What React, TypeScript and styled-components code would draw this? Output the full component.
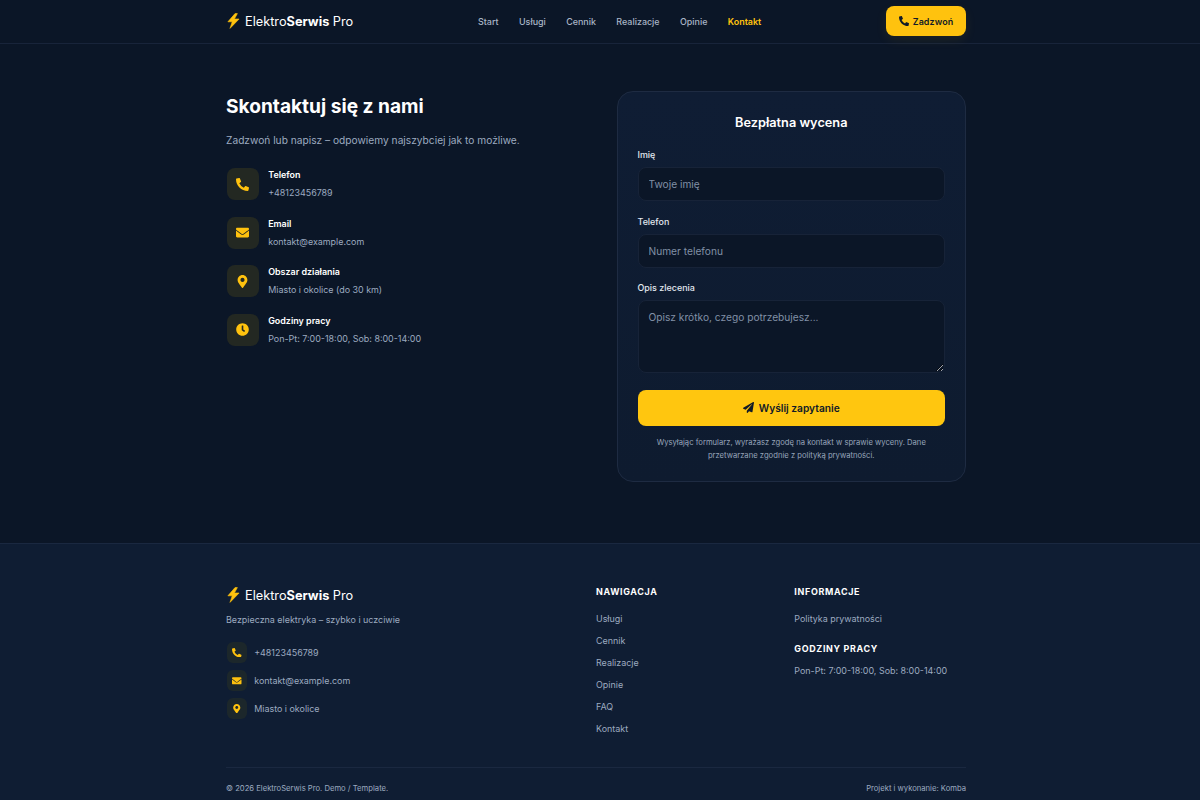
import { createGlobalStyle } from "styled-components";
import styled from "styled-components";
import {
  FaClock,
  FaEnvelope,
  FaMapMarkerAlt,
  FaPaperPlane,
  FaPhoneAlt,
} from "react-icons/fa";

const GlobalStyle = createGlobalStyle`
  * { box-sizing: border-box; }
  body {
    margin: 0;
    background: #0b1627;
    font-family: Inter, "Liberation Sans", sans-serif;
    color: #fff;
  }
`;

const navLinks = ["Start", "Usługi", "Cennik", "Realizacje", "Opinie", "Kontakt"];
const footerLinks = ["Usługi", "Cennik", "Realizacje", "Opinie", "FAQ", "Kontakt"];
const hours = "Pon-Pt: 7:00-18:00, Sob: 8:00-14:00";

const contactItems = [
  { icon: <FaPhoneAlt />, title: "Telefon", value: "+48123456789" },
  { icon: <FaEnvelope />, title: "Email", value: "kontakt@example.com" },
  { icon: <FaMapMarkerAlt />, title: "Obszar działania", value: "Miasto i okolice (do 30 km)" },
  { icon: <FaClock />, title: "Godziny pracy", value: hours },
];

const footerContacts = [
  { icon: <FaPhoneAlt />, value: "+48123456789" },
  { icon: <FaEnvelope />, value: "kontakt@example.com" },
  { icon: <FaMapMarkerAlt />, value: "Miasto i okolice" },
];

function Logo() {
  return (
    <LogoWrap>
      <svg viewBox="0 0 13 16">
        <path
          d="M8 .6 .9 8.8h4.3L3 15.4 12.1 6H7.4l3-5.4Z"
          fill="currentColor"
          stroke="currentColor"
          strokeWidth=".6"
          strokeLinejoin="round"
        />
      </svg>
      <span>
        Elektro<b>Serwis</b> Pro
      </span>
    </LogoWrap>
  );
}

export default function App() {
  return (
    <>
      <GlobalStyle />
      <Header>
        <HeaderInner>
          <Logo />
          <Nav>
            {navLinks.map((name) => (
              <NavLink key={name} $active={name === "Kontakt"}>
                {name}
              </NavLink>
            ))}
          </Nav>
          <CallButton>
            <FaPhoneAlt />
            Zadzwoń
          </CallButton>
        </HeaderInner>
      </Header>

      <MainArea>
        <Main>
          <Info>
            <Title>Skontaktuj się z nami</Title>
            <Lead>Zadzwoń lub napisz – odpowiemy najszybciej jak to możliwe.</Lead>
            <ContactList>
              {contactItems.map((item) => (
                <ContactItem key={item.title}>
                  <IconBox>{item.icon}</IconBox>
                  <div>
                    <ContactTitle>{item.title}</ContactTitle>
                    <ContactValue>{item.value}</ContactValue>
                  </div>
                </ContactItem>
              ))}
            </ContactList>
          </Info>

          <FormCard>
            <FormTitle>Bezpłatna wycena</FormTitle>
            <Field>
              <Label>Imię</Label>
              <Input placeholder="Twoje imię" />
            </Field>
            <Field>
              <Label>Telefon</Label>
              <Input placeholder="Numer telefonu" />
            </Field>
            <Field>
              <Label>Opis zlecenia</Label>
              <TextArea placeholder="Opisz krótko, czego potrzebujesz..." />
            </Field>
            <SubmitButton>
              <FaPaperPlane />
              Wyślij zapytanie
            </SubmitButton>
            <Note>
              Wysyłając formularz, wyrażasz zgodę na kontakt w sprawie wyceny. Dane
              przetwarzane zgodnie z polityką prywatności.
            </Note>
          </FormCard>
        </Main>
      </MainArea>

      <Footer>
        <FooterInner>
          <FooterGrid>
            <FooterBrand>
              <Logo />
              <Tagline>Bezpieczna elektryka – szybko i uczciwie</Tagline>
              <FooterContacts>
                {footerContacts.map((item) => (
                  <FooterContact key={item.value}>
                    <SmallIconBox>{item.icon}</SmallIconBox>
                    {item.value}
                  </FooterContact>
                ))}
              </FooterContacts>
            </FooterBrand>
            <div>
              <FooterHeading>Nawigacja</FooterHeading>
              <FooterLinks>
                {footerLinks.map((name) => (
                  <FooterLink key={name}>{name}</FooterLink>
                ))}
              </FooterLinks>
            </div>
            <div>
              <FooterHeading>Informacje</FooterHeading>
              <FooterLinks>
                <FooterLink>Polityka prywatności</FooterLink>
              </FooterLinks>
              <SecondHeading>Godziny pracy</SecondHeading>
              <HoursList>
                <FooterLink>{hours}</FooterLink>
              </HoursList>
            </div>
          </FooterGrid>
          <FooterBottom>
            <span>© 2026 ElektroSerwis Pro. Demo / Template.</span>
            <span>Projekt i wykonanie: Komba</span>
          </FooterBottom>
        </FooterInner>
      </Footer>
    </>
  );
}

const Header = styled.header`
  height: 44px;
  padding-right: 8px;
  background: #0b1627;
  border-bottom: 1px solid #18243a;
`;

const HeaderInner = styled.div`
  width: 740px;
  height: 42px;
  margin: 0 auto;
  display: flex;
  align-items: center;
  justify-content: space-between;
`;

const LogoWrap = styled.div`
  display: flex;
  align-items: center;
  gap: 5.5px;
  font-size: 12.76px;
  color: #fff;

  svg {
    width: 13px;
    height: 16px;
    margin-left: 0.5px;
    color: #ffc20e;
  }

  b {
    font-weight: 700;
  }
`;

const Nav = styled.nav`
  display: flex;
  gap: 20.4px;
`;

const NavLink = styled.a<{ $active?: boolean }>`
  font-size: 8.93px;
  font-weight: ${(props) => (props.$active ? 600 : 500)};
  color: ${(props) => (props.$active ? "#ffc20e" : "#a9b5c6")};
`;

const CallButton = styled.button`
  width: 80px;
  height: 30px;
  display: flex;
  align-items: center;
  justify-content: center;
  gap: 4px;
  border: 0;
  border-radius: 8px;
  background: #ffc20e;
  color: #111a28;
  font-family: inherit;
  font-size: 8.93px;
  font-weight: 600;
  letter-spacing: 0.1px;
  box-shadow: 0 4px 12px rgba(255, 194, 14, 0.08);

  svg {
    width: 10px;
    height: 10px;
  }
`;

const MainArea = styled.div`
  padding-right: 8px;
`;

const Main = styled.main`
  width: 740px;
  height: 499px;
  margin: 0 auto;
  padding-top: 47px;
  display: grid;
  grid-template-columns: 1fr 1fr;
  column-gap: 41px;
  align-items: start;
`;

const Info = styled.section`
  padding-top: 3px;
`;

const Title = styled.h1`
  margin: 0;
  font-size: 19.14px;
  line-height: 24px;
  font-weight: 700;
`;

const Lead = styled.p`
  margin: 13.5px 0 0;
  font-size: 10.2px;
  line-height: 16px;
  color: #9dabc0;
`;

const ContactList = styled.div`
  margin-top: 20.5px;
  display: flex;
  flex-direction: column;
  gap: 16.5px;
`;

const ContactItem = styled.div`
  display: flex;
  gap: 9.5px;
  margin-left: 0.7px;
`;

const IconBox = styled.div`
  width: 32px;
  height: 32px;
  flex: none;
  display: flex;
  align-items: center;
  justify-content: center;
  border-radius: 8px;
  background: #232822;
  color: #ffc20e;

  svg {
    width: 13px;
    height: 13px;
  }
`;

const ContactTitle = styled.div`
  font-size: 8.93px;
  line-height: 14px;
  font-weight: 600;
  color: #fff;
`;

const ContactValue = styled.div`
  margin-top: 4px;
  font-size: 8.93px;
  line-height: 14px;
  color: #9dabc0;
`;

const FormCard = styled.section`
  height: 391px;
  padding: 21px 20px 20px;
  border: 1px solid #1e2b42;
  border-radius: 16px;
  background: linear-gradient(180deg, #0f1d34, #0e1b2f);
`;

const FormTitle = styled.h2`
  margin: 0 0 15px;
  text-align: center;
  font-size: 12.76px;
  line-height: 20px;
  font-weight: 600;
`;

const Field = styled.div`
  margin-bottom: 13.5px;
`;

const Label = styled.label`
  display: block;
  margin-bottom: 6px;
  font-size: 8.93px;
  line-height: 13px;
  font-weight: 500;
  color: #e2e8f0;
`;

const Input = styled.input`
  display: block;
  width: 100%;
  height: 34px;
  padding: 0 10px;
  border: 1px solid #172338;
  border-radius: 8px;
  outline: none;
  background: #0b1627;
  color: #fff;
  font-family: inherit;
  font-size: 10.2px;

  &::placeholder {
    color: #8190a6;
  }
`;

const TextArea = styled.textarea`
  display: block;
  width: 100%;
  height: 73px;
  padding: 10px;
  border: 1px solid #172338;
  border-radius: 8px;
  outline: none;
  background: #0b1627;
  color: #fff;
  font-family: inherit;
  font-size: 10.2px;
  resize: vertical;

  &::placeholder {
    color: #8190a6;
  }
`;

const SubmitButton = styled.button`
  width: 100%;
  height: 36px;
  margin-top: 16.5px;
  display: flex;
  align-items: center;
  justify-content: center;
  gap: 5px;
  border: 0;
  border-radius: 8px;
  background: #ffc60f;
  color: #111a28;
  font-family: inherit;
  font-size: 10.2px;
  font-weight: 600;

  svg {
    width: 11px;
    height: 11px;
  }
`;

const Note = styled.p`
  margin: 10px 0 0;
  text-align: center;
  font-size: 7.66px;
  line-height: 13px;
  color: #97a5ba;
`;

const Footer = styled.footer`
  height: 257px;
  padding-right: 8px;
  border-top: 1px solid #1a2840;
  background: #0f1d33;
`;

const FooterInner = styled.div`
  width: 740px;
  margin: 0 auto;
  padding-top: 40.5px;
`;

const FooterGrid = styled.div`
  display: grid;
  grid-template-columns: 2fr 1fr 1fr;
  column-gap: 26.67px;
  height: 182.5px;
`;

const FooterBrand = styled.div`
  padding-top: 2.5px;
`;

const Tagline = styled.p`
  margin: 10px 0 0;
  font-size: 8.93px;
  line-height: 14px;
  color: #9dabc0;
`;

const FooterContacts = styled.div`
  margin-top: 15px;
  display: flex;
  flex-direction: column;
  gap: 7.5px;
`;

const FooterContact = styled.div`
  display: flex;
  align-items: center;
  gap: 7px;
  margin-left: 0.7px;
  font-size: 8.93px;
  color: #9dabc0;
`;

const SmallIconBox = styled.div`
  width: 20.5px;
  height: 20.5px;
  flex: none;
  display: flex;
  align-items: center;
  justify-content: center;
  border-radius: 6px;
  background: #1c272b;
  color: #ffc20e;

  svg {
    width: 9.5px;
    height: 9.5px;
  }
`;

const FooterHeading = styled.h3`
  margin: 0;
  font-size: 8.93px;
  line-height: 14px;
  font-weight: 700;
  letter-spacing: 0.67px;
  text-transform: uppercase;
`;

const SecondHeading = styled(FooterHeading)`
  margin-top: 15.5px;
`;

const FooterLinks = styled.div`
  margin-top: 13.5px;
  display: flex;
  flex-direction: column;
  gap: 8px;
`;

const HoursList = styled(FooterLinks)`
  margin-top: 8.5px;
`;

const FooterLink = styled.a`
  font-size: 8.93px;
  line-height: 14px;
  color: #9dabc0;
`;

const FooterBottom = styled.div`
  padding-top: 15px;
  border-top: 1px solid #1a2840;
  display: flex;
  justify-content: space-between;
  font-size: 7.66px;
  line-height: 12px;
  color: #9dabc0;
`;
